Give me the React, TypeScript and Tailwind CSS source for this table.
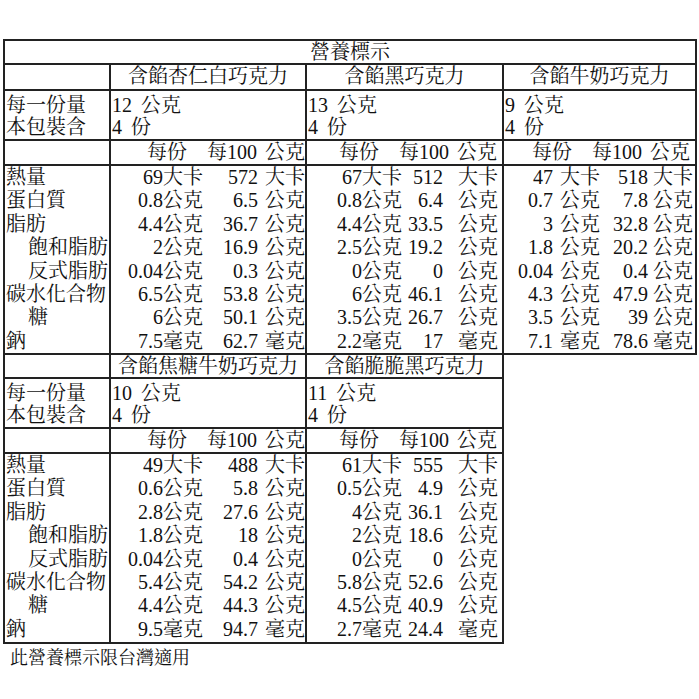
import React from 'react';

type Row = [string, string, string, string];

interface Product {
  name: string;
  serving: string;
  layout: 'a' | 'b' | 'c';
  rows: Row[];
}

const LABELS: [string, boolean][] = [
  ['熱量', false],
  ['蛋白質', false],
  ['脂肪', false],
  ['飽和脂肪', true],
  ['反式脂肪', true],
  ['碳水化合物', false],
  ['糖', true],
  ['鈉', false],
];

const g = (n1: string, n2: string, u = '公克'): Row => [n1, u, n2, u];

const rowsOf = (kcal: [string, string], grams: [string, string][], na: [string, string]): Row[] => [
  [kcal[0], '大卡', kcal[1], '大卡'],
  ...grams.map(([a, b]) => g(a, b)),
  g(na[0], na[1], '毫克'),
];

const almond: Product = {
  name: '含餡杏仁白巧克力',
  serving: '12',
  layout: 'a',
  rows: rowsOf(['69', '572'], [['0.8', '6.5'], ['4.4', '36.7'], ['2', '16.9'], ['0.04', '0.3'], ['6.5', '53.8'], ['6', '50.1']], ['7.5', '62.7']),
};

const dark: Product = {
  name: '含餡黑巧克力',
  serving: '13',
  layout: 'b',
  rows: rowsOf(['67', '512'], [['0.8', '6.4'], ['4.4', '33.5'], ['2.5', '19.2'], ['0', '0'], ['6', '46.1'], ['3.5', '26.7']], ['2.2', '17']),
};

const milk: Product = {
  name: '含餡牛奶巧克力',
  serving: '9',
  layout: 'c',
  rows: rowsOf(['47', '518'], [['0.7', '7.8'], ['3', '32.8'], ['1.8', '20.2'], ['0.04', '0.4'], ['4.3', '47.9'], ['3.5', '39']], ['7.1', '78.6']),
};

const caramel: Product = {
  name: '含餡焦糖牛奶巧克力',
  serving: '10',
  layout: 'a',
  rows: rowsOf(['49', '488'], [['0.6', '5.8'], ['2.8', '27.6'], ['1.8', '18'], ['0.04', '0.4'], ['5.4', '54.2'], ['4.4', '44.3']], ['9.5', '94.7']),
};

const crispy: Product = {
  name: '含餡脆脆黑巧克力',
  serving: '11',
  layout: 'b',
  rows: rowsOf(['61', '555'], [['0.5', '4.9'], ['4', '36.1'], ['2', '18.6'], ['0', '0'], ['5.8', '52.6'], ['4.5', '40.9']], ['2.7', '24.4']),
};

// sub-column positions inside each product cell
const LAYOUT = {
  a: { grid: 'grid-cols-[52px_40px_62px_40px]', u1: '', n2: 'pr-[7px]', head: 'pr-0' },
  b: { grid: 'grid-cols-[55px_40px_56px_40px]', u1: '', n2: 'pr-[15px]', head: 'pr-[5px]' },
  c: { grid: 'grid-cols-[49px_47px_53px_40px]', u1: 'pl-[7px]', n2: 'pr-[5px]', head: 'pr-[5px]' },
};

const line = 'border-l-2 border-t-2 border-[#222]';

function Block({ products, widths, first }: { products: Product[]; widths: string[]; first: boolean }) {
  const top = first ? line : 'border-l-2 border-[#222]';
  return (
    <div className="w-fit border-r-2 border-b-2 border-[#222]">
      {first && (
        <div className={`${line} h-[24px] w-[692px] text-center leading-[22px]`}>營養標示</div>
      )}

      {/* 品名 */}
      <div className="flex">
        <div className={`${top} ${first ? 'h-[26px]' : 'h-[22px]'} w-[106px]`} />
        {products.map((p, i) => (
          <div key={p.name} className={`${top} ${first ? 'h-[26px]' : 'h-[22px]'} ${widths[i]} text-center leading-[22px]`}>
            {p.name}
          </div>
        ))}
      </div>

      {/* 份量 */}
      <div className="flex">
        <div className={`${line} h-[50px] w-[106px] pl-[1px] pt-[3px] leading-[22px]`}>
          <div>每一份量</div>
          <div>本包裝含</div>
        </div>
        {products.map((p, i) => (
          <div key={p.name} className={`${line} h-[50px] ${widths[i]} pl-[1px] pt-[3px] leading-[22px]`}>
            <div>
              {p.serving}
              <span className="ml-[9px]">公克</span>
            </div>
            <div>
              4<span className="ml-[9px]">份</span>
            </div>
          </div>
        ))}
      </div>

      {/* 每份 / 每100公克 */}
      <div className="flex">
        <div className={`${line} h-[25px] w-[106px]`} />
        {products.map((p, i) => (
          <div key={p.name} className={`${line} h-[25px] ${widths[i]} flex justify-end leading-[23px] ${LAYOUT[p.layout].head}`}>
            <span>每份</span>
            <span className="ml-[20px]">每100</span>
            <span className="ml-[8px]">公克</span>
          </div>
        ))}
      </div>

      {/* 營養素 */}
      <div className="flex">
        <div className={`${line} ${first ? 'h-[189px]' : 'h-[190px]'} w-[106px] pl-[1px]`}>
          {LABELS.map(([label, sub]) => (
            <div key={label} className={`h-[23.4px] leading-[23.4px] ${sub ? 'pl-[22px]' : ''}`}>
              {label}
            </div>
          ))}
        </div>
        {products.map((p, i) => {
          const l = LAYOUT[p.layout];
          return (
            <div key={p.name} className={`${line} ${first ? 'h-[189px]' : 'h-[190px]'} ${widths[i]}`}>
              {p.rows.map((r, j) => (
                <div key={j} className={`grid ${l.grid} h-[23.4px] leading-[23.4px] whitespace-nowrap`}>
                  <span className="text-right">{r[0]}</span>
                  <span className={l.u1}>{r[1]}</span>
                  <span className={`text-right ${l.n2}`}>{r[2]}</span>
                  <span>{r[3]}</span>
                </div>
              ))}
            </div>
          );
        })}
      </div>
    </div>
  );
}

export default function App() {
  return (
    <div
      className="w-[699px] h-[699px] bg-white pl-[3px] pt-[39px] text-[20px] text-[#111]"
      style={{ fontFamily: '"Liberation Serif", "Noto Serif CJK TC", "Noto Sans CJK TC", serif' }}
    >
      <Block products={[almond, dark, milk]} widths={['w-[196px]', 'w-[197px]', 'w-[193px]']} first />
      <Block products={[caramel, crispy]} widths={['w-[196px]', 'w-[197px]']} first={false} />
      <div className="pl-[7px] pt-[3px] text-[18px] leading-[22px]">此營養標示限台灣適用</div>
    </div>
  );
}
